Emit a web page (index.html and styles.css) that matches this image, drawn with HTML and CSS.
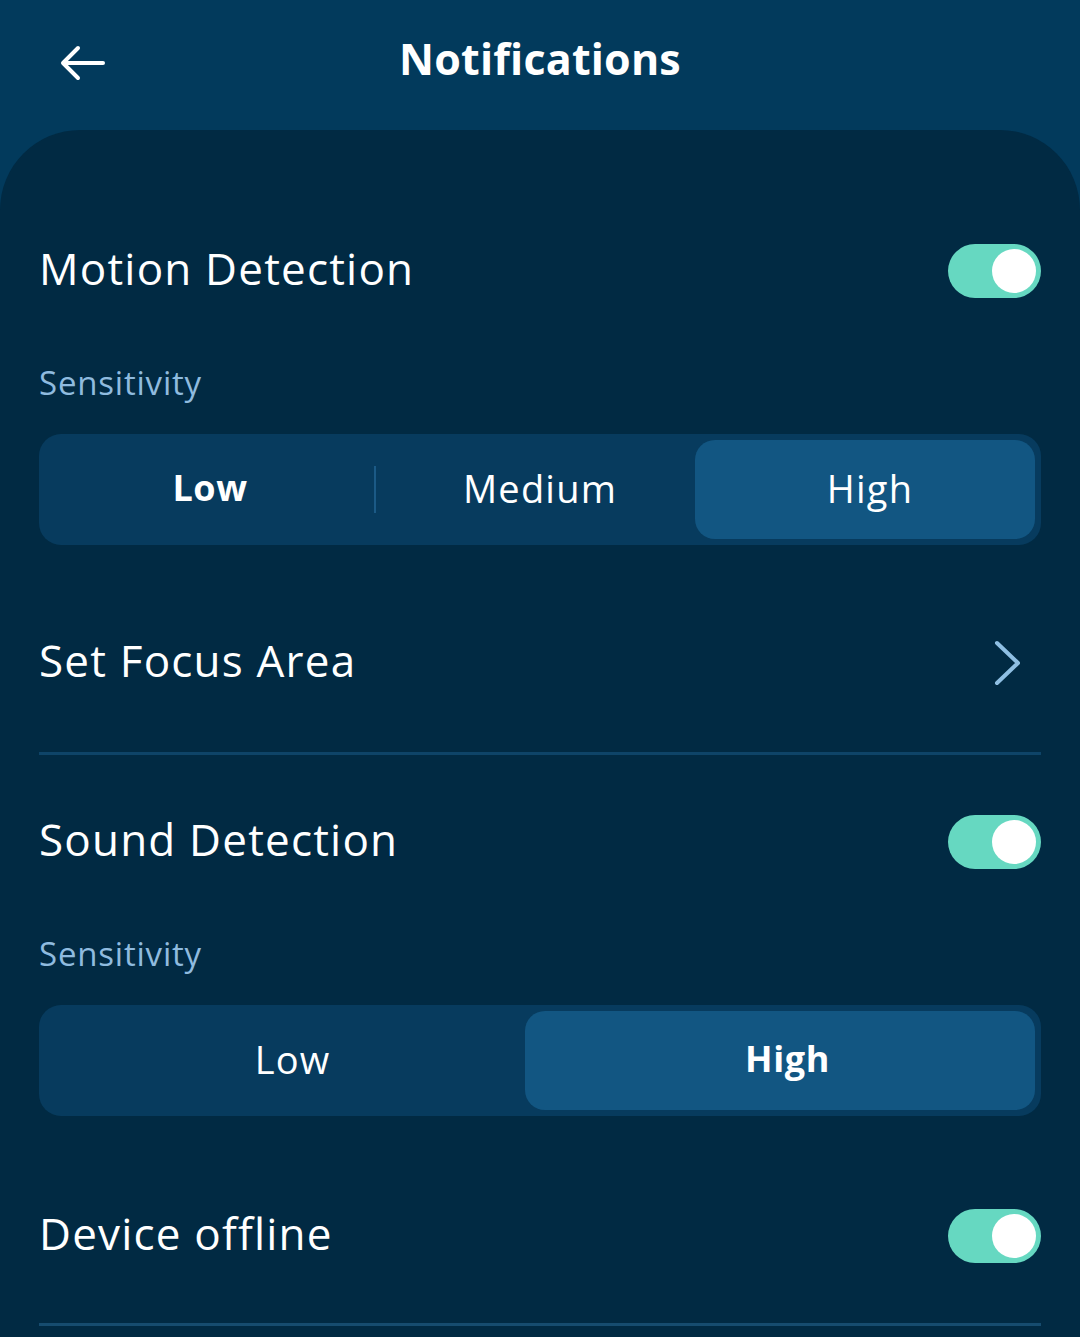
FILE: index.html
```html
<!DOCTYPE html>
<html lang="en">
<head>
<meta charset="utf-8">
<title>Notifications</title>
<link rel="stylesheet" href="styles.css">
</head>
<body>
<div class="screen">
  <header class="topbar">
    <button class="back" aria-label="Back">
      <svg width="46" height="36" viewBox="0 0 46 36" fill="none" stroke="#ffffff" stroke-width="4" stroke-linecap="round" stroke-linejoin="round">
        <path d="M43 18H4"/>
        <path d="M18 3L3 18L18 33"/>
      </svg>
    </button>
    <h1 class="title">Notifications</h1>
  </header>
  <main class="card">
    <div class="row toggle-row first">
      <span class="row-label">Motion Detection</span>
      <span class="toggle"><span class="knob"></span></span>
    </div>
    <div class="sub-label">Sensitivity</div>
    <div class="segmented three">
      <div class="seg bold">Low</div>
      <div class="seg divided">Medium</div>
      <div class="seg active last">High</div>
    </div>
    <div class="row link-row">
      <span class="row-label">Set Focus Area</span>
      <svg class="chevron" width="30" height="46" viewBox="0 0 30 46" fill="none" stroke="#8fbfe3" stroke-width="4" stroke-linecap="round" stroke-linejoin="round">
        <path d="M4 3L25 23L4 43"/>
      </svg>
    </div>
    <div class="divider"></div>
    <div class="row toggle-row after-divider">
      <span class="row-label">Sound Detection</span>
      <span class="toggle"><span class="knob"></span></span>
    </div>
    <div class="sub-label">Sensitivity</div>
    <div class="segmented two">
      <div class="seg">Low</div>
      <div class="seg active bold last">High</div>
    </div>
    <div class="row toggle-row after-seg">
      <span class="row-label">Device offline</span>
      <span class="toggle"><span class="knob"></span></span>
    </div>
    <div class="divider bottom"></div>
  </main>
</div>
</body>
</html>
```

FILE: styles.css
```css
* { box-sizing: border-box; }
html, body {
  margin: 0;
  padding: 0;
  background: #003a5c;
}
body {
  font-family: "Open Sans", "Liberation Sans", sans-serif;
  color: #ffffff;
}
.screen {
  width: 1080px;
  height: 1337px;
  overflow: hidden;
  background: #023a5c;
  display: flex;
  flex-direction: column;
}
.topbar {
  height: 130px;
  display: flex;
  align-items: center;
  justify-content: center;
  position: relative;
  padding-bottom: 14px;
}
.back {
  position: absolute;
  left: 60px;
  top: 45px;
  background: none;
  border: none;
  padding: 0;
  width: 46px;
  height: 36px;
  display: flex;
}
.title {
  margin: 0;
  font-size: 43px;
  font-weight: 700;
  letter-spacing: 0.2px;
}
.card {
  flex: 1;
  background: #012a43;
  border-radius: 80px 80px 0 0;
  padding: 0 39px;
  display: flex;
  flex-direction: column;
}
.row {
  display: flex;
  align-items: center;
  justify-content: space-between;
}
.row-label {
  font-size: 44px;
  font-weight: 400;
  letter-spacing: 1.2px;
  line-height: 54px;
  padding-bottom: 7px;
}
.toggle-row { height: 54px; }
.toggle-row.first { margin-top: 114px; }
.toggle-row.after-divider { margin-top: 60px; }
.toggle-row.after-seg { margin-top: 93px; }
.toggle {
  width: 93px;
  height: 54px;
  border-radius: 27px;
  background: #66d8c1;
  display: flex;
  align-items: center;
  justify-content: flex-end;
  padding-right: 5px;
}
.knob {
  width: 44px;
  height: 44px;
  border-radius: 50%;
  background: #ffffff;
}
.sub-label {
  margin-top: 65px;
  font-size: 33px;
  line-height: 40px;
  color: #8fbbdf;
  letter-spacing: 0.8px;
}
.segmented {
  margin-top: 31px;
  height: 111px;
  background: #073b5e;
  border-radius: 22px;
  padding: 6px;
  display: grid;
}
.segmented.three { grid-template-columns: 1fr 1fr 1fr; }
.segmented.two { grid-template-columns: 1fr 1fr; }
.seg {
  display: flex;
  align-items: center;
  justify-content: center;
  font-size: 38px;
  font-weight: 400;
  letter-spacing: 1.2px;
  border-radius: 20px;
  position: relative;
  padding-bottom: 4px;
}
.seg.bold {
  font-weight: 700;
  font-size: 36px;
  letter-spacing: 0.6px;
}
.seg.divided::before {
  content: "";
  position: absolute;
  left: -1px;
  top: 26px;
  bottom: 26px;
  width: 2px;
  background: #1b5a86;
}
.seg.active {
  background: #125682;
}
.segmented.three .seg.last {
  margin-left: -10px;
  padding-left: 10px;
}
.segmented.two .seg.last {
  margin-left: -15px;
  padding-left: 15px;
}
.link-row {
  height: 60px;
  margin-top: 88px;
}
.chevron { margin-right: 18px; }
.divider {
  margin-top: 59px;
  height: 3px;
  background: #0e4468;
}
.divider.bottom {
  margin-top: 60px;
  background: #164c6f;
}
```
